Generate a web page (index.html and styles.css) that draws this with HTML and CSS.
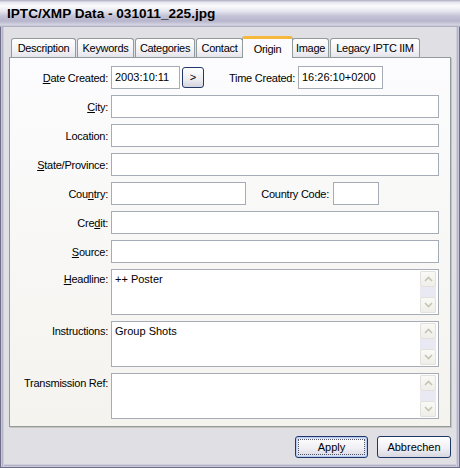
FILE: index.html
```html
<!DOCTYPE html>
<html lang="en">
<head>
    <meta charset="UTF-8">
    <title>IPTC/XMP Data - 031011_225.jpg</title>
    <link rel="stylesheet" href="styles.css">
</head>
<body>
    <div class="window">
        <div class="titlebar">IPTC/XMP Data - 031011_225.jpg</div>
        <div class="client">
            <div class="tabs">
                <div class="tab t_desc">Description</div>
                <div class="tab t_keys">Keywords</div>
                <div class="tab t_cats">Categories</div>
                <div class="tab t_contact">Contact</div>
                <div class="tab active">Origin</div>
                <div class="tab t_image">Image</div>
                <div class="tab t_legacy">Legacy IPTC IIM</div>
            </div>
            <div class="panel">
                <div class="row">
                    <div class="lbl"><u>D</u>ate Created:</div>
                    <div class="field">
                        <div class="input w_date">2003:10:11</div>
                        <div class="btn_small">&gt;</div>
                        <div class="lbl_inline">Time Created:</div>
                        <div class="input w_time">16:26:10+0200</div>
                    </div>
                </div>
                <div class="row">
                    <div class="lbl"><u>C</u>ity:</div>
                    <div class="input"></div>
                </div>
                <div class="row">
                    <div class="lbl">Location:</div>
                    <div class="input"></div>
                </div>
                <div class="row">
                    <div class="lbl"><u>S</u>tate/Province:</div>
                    <div class="input"></div>
                </div>
                <div class="row">
                    <div class="lbl">Cou<u>n</u>try:</div>
                    <div class="field">
                        <div class="input w_country">
                        </div>
                        <div class="lbl_inline lbl_code">Country Code:</div>
                        <div class="input w_code"></div>
                    </div>
                </div>
                <div class="row">
                    <div class="lbl">Cre<u>d</u>it:</div>
                    <div class="input"></div>
                </div>
                <div class="row">
                    <div class="lbl"><u>S</u>ource:</div>
                    <div class="input"></div>
                </div>
                <div class="row row_memo">
                    <div class="lbl"><u>H</u>eadline:</div>
                    <div class="memo">
                        <div class="memo_text">++ Poster</div>
                        <div class="scroll">
                            <div class="arrow"><svg width="9" height="6" viewBox="0 0 9 6"><path d="M1 5 L4.5 1.5 L8 5" fill="none" stroke="#c6c4b8" stroke-width="1.6"/></svg></div>
                            <div class="track"></div>
                            <div class="arrow"><svg width="9" height="6" viewBox="0 0 9 6"><path d="M1 1 L4.5 4.5 L8 1" fill="none" stroke="#c6c4b8" stroke-width="1.6"/></svg></div>
                        </div>
                    </div>
                </div>
                <div class="row row_memo">
                    <div class="lbl">Instructions:</div>
                    <div class="memo">
                        <div class="memo_text">Group Shots</div>
                        <div class="scroll">
                            <div class="arrow"><svg width="9" height="6" viewBox="0 0 9 6"><path d="M1 5 L4.5 1.5 L8 5" fill="none" stroke="#c6c4b8" stroke-width="1.6"/></svg></div>
                            <div class="track"></div>
                            <div class="arrow"><svg width="9" height="6" viewBox="0 0 9 6"><path d="M1 1 L4.5 4.5 L8 1" fill="none" stroke="#c6c4b8" stroke-width="1.6"/></svg></div>
                        </div>
                    </div>
                </div>
                <div class="row row_memo">
                    <div class="lbl">Transmission Ref:</div>
                    <div class="memo">
                        <div class="memo_text"></div>
                        <div class="scroll">
                            <div class="arrow"><svg width="9" height="6" viewBox="0 0 9 6"><path d="M1 5 L4.5 1.5 L8 5" fill="none" stroke="#c6c4b8" stroke-width="1.6"/></svg></div>
                            <div class="track"></div>
                            <div class="arrow"><svg width="9" height="6" viewBox="0 0 9 6"><path d="M1 1 L4.5 4.5 L8 1" fill="none" stroke="#c6c4b8" stroke-width="1.6"/></svg></div>
                        </div>
                    </div>
                </div>
            </div>
            <div class="footer">
                <div class="btn btn_default"><span class="focus">Apply</span></div>
                <div class="btn">Abbrechen</div>
            </div>
        </div>
    </div>
</body>
</html>
```

FILE: styles.css
```css
body
{
    margin: 0;
    font-family: "Liberation Sans", Arial, sans-serif;
    font-size: 11px;
    color: #000;
}
.window
{
    width: 460px;
    height: 468px;
    display: flex;
    flex-direction: column;
    background-color: #e0dfe3;
}
.titlebar
{
    height: 27px;
    flex: none;
    box-sizing: border-box;
    padding: 4px 0 0 7px;
    font-size: 13.6px;
    font-weight: bold;
    line-height: 20px;
    background: linear-gradient(to bottom, #a9a8bd 0, #e4e4ee 2px, #fbfbfd 6px, #e6e6ef 11px, #c4c3d7 16px, #b6b5cc 21px, #d6d6e3 25px, #a3a2b9 27px);
}
.client
{
    flex: 1;
    display: flex;
    flex-direction: column;
    padding: 9px 7px 0 8px;
    border: 1px solid #6f6e87;
    border-top: 0;
    box-shadow: inset 1px 0 0 #c9c8d9, inset 2px 0 0 #b3b2c8, inset 3px 0 0 #cfcedd,
                inset -1px 0 0 #c9c8d9, inset -2px 0 0 #b3b2c8, inset -3px 0 0 #cfcedd,
                inset 0 -1px 0 #c9c8d9, inset 0 -2px 0 #b3b2c8, inset 0 -3px 0 #cfcedd;
}
.tabs
{
    height: 22px;
    display: flex;
    align-items: flex-start;
    gap: 1px;
    padding-left: 2px;
    margin-bottom: -1px;
    position: relative;
    z-index: 1;
}
.tab
{
    height: 19px;
    margin-top: 2px;
    box-sizing: border-box;
    line-height: 18px;
    text-align: center;
    border: 1px solid #919b9c;
    border-bottom: 0;
    border-radius: 3px 3px 0 0;
    background: linear-gradient(to bottom, #fff, #f3f3f7 60%, #e4e4ec);
    white-space: nowrap;
    letter-spacing: -0.3px;
}
.t_desc { width: 65px; }
.t_keys { width: 57px; }
.t_cats { width: 60px; }
.t_contact { width: 47px; }
.t_image { width: 37px; }
.t_legacy { width: 90px; }
.tab.active
{
    width: 51px;
    height: 22px;
    margin: 0 -2px;
    line-height: 20px;
    background: #fcfcfe;
    border-top: 3px solid #f6b83c;
    border-radius: 3px 3px 0 0;
}
.panel
{
    height: 370px;
    flex: none;
    box-sizing: border-box;
    padding: 8px 11px 0 0;
    margin-right: 1px;
    border: 1px solid #919b9c;
    background: linear-gradient(to bottom, #fcfcfe, #f4f3ee);
    box-shadow: 1px 1px 0 #c4c3be;
    display: flex;
    flex-direction: column;
    gap: 6px;
}
.row
{
    display: grid;
    grid-template-columns: 98px 1fr;
    column-gap: 3px;
    align-items: center;
}
.row_memo
{
    align-items: start;
}
.row_memo .lbl
{
    padding-top: 4px;
}
.lbl
{
    text-align: right;
    white-space: nowrap;
    letter-spacing: -0.25px;
}
.field
{
    display: flex;
    align-items: center;
}
.input
{
    height: 23px;
    box-sizing: border-box;
    padding: 0 3px;
    line-height: 20px;
    border: 1px solid #a5acb5;
    background-color: #fff;
    white-space: nowrap;
}
.w_date
{
    width: 69px;
}
.w_time
{
    width: 85px;
    margin-right: 56px;
}
.w_country
{
    width: 135px;
}
.w_code
{
    width: 46px;
    margin-right: 60px;
}
.lbl_inline
{
    flex: 1;
    text-align: right;
    padding-right: 3px;
    white-space: nowrap;
    letter-spacing: -0.25px;
}
.lbl_code
{
    padding-right: 4px;
}
.btn_small
{
    width: 22px;
    height: 21px;
    margin-left: 2px;
    box-sizing: border-box;
    border: 1px solid #20396a;
    border-radius: 3px;
    background: linear-gradient(to bottom, #fff, #ececf2 60%, #d4d3dd);
    text-align: center;
    line-height: 19px;
}
.memo
{
    height: 46px;
    box-sizing: border-box;
    border: 1px solid #a5acb5;
    background-color: #fff;
    display: flex;
}
.memo_text
{
    flex: 1;
    padding: 3px 3px;
    line-height: 13px;
}
.scroll
{
    width: 16px;
    margin: 1px 2px 1px 0;
    display: flex;
    flex-direction: column;
    background-color: #f3f3f8;
}
.arrow
{
    height: 16px;
    box-sizing: border-box;
    border: 1px solid #e2e1dc;
    border-radius: 2px;
    background: linear-gradient(to bottom, #f9f9f6, #efeee9);
    display: flex;
    align-items: center;
    justify-content: center;
}
.track
{
    flex: 1;
    background-color: #e9e9f4;
}
.footer
{
    display: flex;
    justify-content: flex-end;
    gap: 9px;
    margin-top: 9px;
    padding-right: 1px;
}
.btn
{
    width: 74px;
    height: 22px;
    box-sizing: border-box;
    border: 1px solid #1f3768;
    border-radius: 3px;
    background: linear-gradient(to bottom, #fff, #f0f0f5 55%, #d8d7e1);
    text-align: center;
    line-height: 20px;
}
.btn_default
{
    width: 73px;
    padding: 2px;
    line-height: 16px;
    box-shadow: inset 0 0 0 1px #b9cdf1, inset 0 0 0 2px #d6e1f7;
}
.focus
{
    display: block;
    height: 16px;
    box-sizing: border-box;
    border: 1px dotted #556;
    line-height: 14px;
}
```
